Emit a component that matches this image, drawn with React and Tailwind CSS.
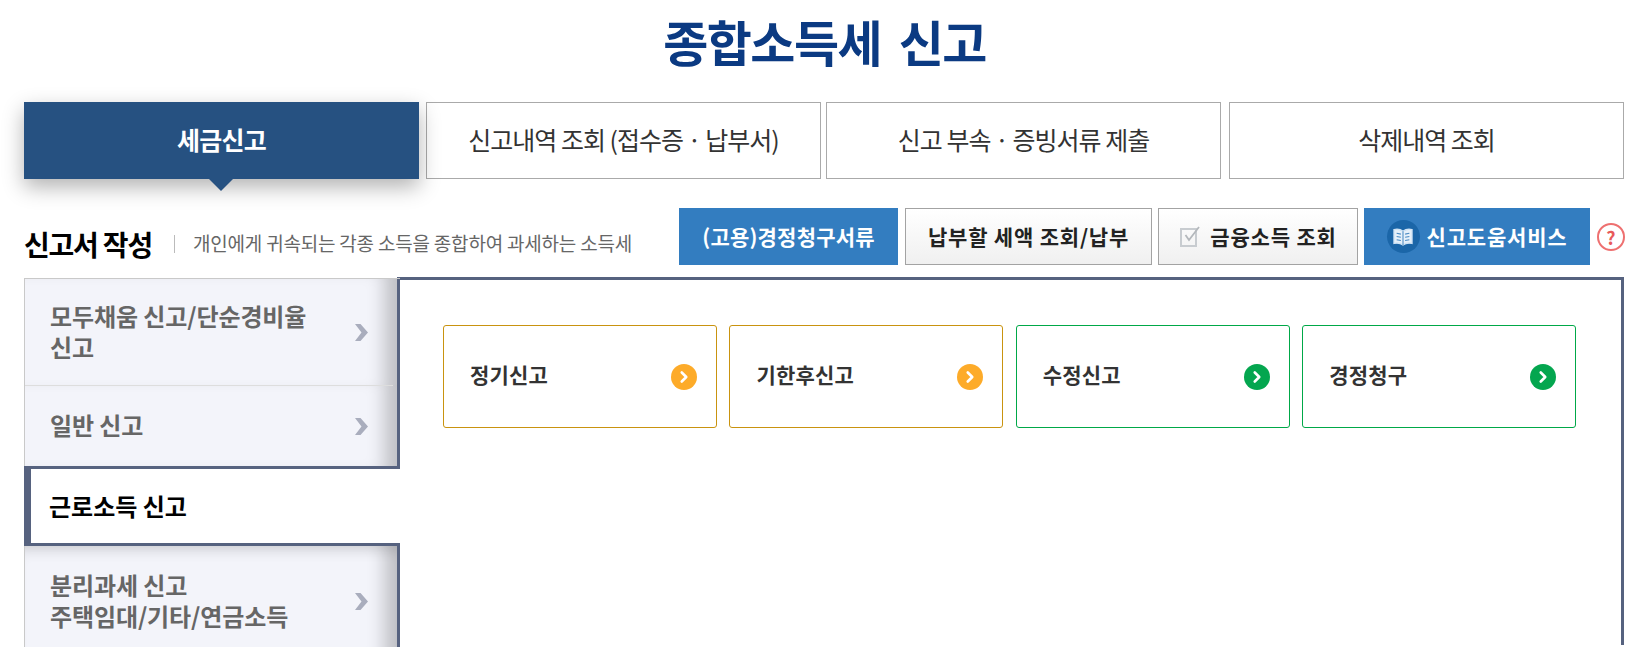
import { ChevronRight } from "lucide-react";

const FONT = "font-['Noto_Sans_CJK_KR','Noto_Sans',sans-serif]";

const tabs = [
    { label: "신고내역 조회 (접수증 · 납부서)", gap: "ml-[7px]" },
    { label: "신고 부속 · 증빙서류 제출", gap: "ml-[5px]" },
    { label: "삭제내역 조회", gap: "ml-[8px]" },
];

const cards = [
    { label: "정기신고", color: "orange" },
    { label: "기한후신고", color: "orange" },
    { label: "수정신고", color: "green" },
    { label: "경정청구", color: "green" },
];

const SIDE_SHADOW = "shadow-[inset_-24px_0_18px_-12px_rgba(0,0,0,0.22)]";

function MenuArrow() {
    return (
        <svg width="15" height="19" viewBox="0 0 15 19" className="shrink-0">
            <path d="M1 1h5.500L14 9.500 6.500 18H1l6.500-8.500z" fill="#a9adbd" />
        </svg>
    );
}

function SideItem({ text, className = "" }) {
    return (
        <div className={`relative flex items-center justify-between pl-[25px] pr-[28px] bg-[#f3f4fa] border-l border-[#c9c9c9] border-r-[3px] border-r-[#56627f] ${className}`}>
            <div className="text-[24px] leading-[31px] font-bold tracking-[-0.1px] text-[#666666] -mt-[3px] whitespace-pre-line">
                {text}
            </div>
            <MenuArrow />
        </div>
    );
}

function Card({ label, color }) {
    const orange = color === "orange";
    return (
        <div className={`flex-1 h-[103px] rounded-[3px] border flex items-center justify-between pl-[26px] pr-[19px] ${orange ? "border-[#c9930f]" : "border-[#00a848]"}`}>
            <span className="text-[21px] font-bold text-[#333333] tracking-[0.2px] -mt-[4px]">{label}</span>
            <span className={`w-[26px] h-[26px] rounded-full flex items-center justify-center ${orange ? "bg-[#fdab29]" : "bg-[#04a64f]"}`}>
                <ChevronRight size={18} strokeWidth={3.5} color="#ffffff" />
            </span>
        </div>
    );
}

export default function App() {
    return (
        <div className={`w-[1633px] h-[647px] overflow-hidden bg-white ${FONT}`}>
            <h1 className="h-[102px] pt-[9px] pl-[16px] text-center text-[49px] leading-[64px] font-bold text-[#0b3a82] tracking-[-1.5px] [word-spacing:8px]">
                종합소득세 신고
            </h1>

            <div className="flex pl-[24px]">
                <div className="relative w-[395px] h-[77px] pb-[2px] bg-[#265181] flex items-center justify-center text-white text-[25px] font-bold tracking-[-0.8px] shadow-[0_8px_20px_rgba(0,0,0,0.3)]">
                    세금신고
                    <div className="absolute left-[185px] top-[77px] w-0 h-0 border-l-[12px] border-r-[12px] border-t-[12px] border-l-transparent border-r-transparent border-t-[#265181]" />
                </div>
                {tabs.map((t) => (
                    <div key={t.label} className={`w-[395px] h-[77px] pb-[2px] border border-[#aaaaaa] flex items-center justify-center text-[25px] text-[#333333] tracking-[-1px] ${t.gap}`}>
                        {t.label}
                    </div>
                ))}
            </div>

            <div className="flex items-center h-[99px] pl-[24px] pr-[8px] pt-[30px]">
                <div className="text-[28px] font-bold text-black tracking-[-1.2px]">신고서 작성</div>
                <div className="w-px h-[18px] bg-[#bbbbbb] ml-[22px] mr-[18px]" />
                <div className="text-[19px] text-[#666666] tracking-[-0.2px]">개인에게 귀속되는 각종 소득을 종합하여 과세하는 소득세</div>
                <div className="ml-auto flex items-center gap-[6px] -mt-[14px]">
                    <div className="w-[219px] h-[57px] mr-[1px] bg-[#337dc0] flex items-center justify-center text-white text-[21px] font-bold tracking-[0.2px]">
                        (고용)경정청구서류
                    </div>
                    <div className="w-[247px] h-[57px] border border-[#a3a3a3] bg-gradient-to-b from-white to-[#f0f0f0] flex items-center justify-center text-[21px] font-bold text-[#222222] tracking-[0.8px]">
                        납부할 세액 조회/납부
                    </div>
                    <div className="w-[200px] h-[57px] border border-[#a3a3a3] bg-gradient-to-b from-white to-[#f0f0f0] flex items-center justify-center gap-[8px] text-[21px] font-bold text-[#222222] tracking-[0.8px]">
                        <svg width="23" height="23" viewBox="0 0 23 23" fill="none">
                            <path d="M2 4h15v17H2z" stroke="#c8ccd0" strokeWidth="2" />
                            <path d="M6.500 10l3.500 5L20 2" stroke="#b4b8bc" strokeWidth="1.8" />
                        </svg>
                        금융소득 조회
                    </div>
                    <div className="w-[226px] h-[57px] bg-[#337dc0] flex items-center justify-center gap-[7px] text-white text-[21px] font-bold tracking-[0.8px]">
                        <span className="w-[33px] h-[33px] rounded-full bg-[#1b66a8] flex items-center justify-center">
                            <svg width="22" height="18" viewBox="0 0 20 17" fill="none" stroke="#cfe3f5" strokeWidth="1.3">
                                <path d="M10 3C8 1.500 4 1 1.500 1.500v13C4 14 8 14.500 10 16c2-1.500 6-2 8.500-1.500v-13C16 1 12 1.500 10 3z" fill="#e6f0f9" />
                                <path d="M10 3v13M4 5l4 .8M4 8l4 .8M4 11l4 .8M16 5l-4 .8M16 8l-4 .8M16 11l-4 .8" stroke="#4b8bc4" strokeWidth="1" />
                            </svg>
                        </span>
                        신고도움서비스
                    </div>
                    <span className="w-[28px] h-[28px] ml-[1px] rounded-full border-2 border-[#ee7070] bg-white flex items-center justify-center text-[#e85a5a] text-[18px] font-bold leading-none">
                        ?
                    </span>
                </div>
            </div>

            <div className="flex pl-[24px] pr-[9px]">
                <div className="relative z-10 w-[376px] shrink-0 flex flex-col border-t border-[#c9c9c9]">
                    <SideItem text={"모두채움 신고/단순경비율\n신고"} className={`h-[107px] after:absolute after:left-0 after:right-[4px] after:bottom-0 after:h-px after:bg-[#dddddd] ${SIDE_SHADOW}`} />
                    <SideItem text="일반 신고" className={`h-[80px] ${SIDE_SHADOW}`} />
                    <div className="h-[80px] flex items-center bg-white border-[3px] border-r-0 border-l-[7px] border-[#56627f] pl-[18px] text-[24px] font-bold text-black tracking-[0px]">
                        <span className="-mt-[1px]">근로소득 신고</span>
                    </div>
                    <SideItem text={"분리과세 신고\n주택임대/기타/연금소득"} className="h-[110px] shadow-[inset_-24px_0_18px_-12px_rgba(0,0,0,0.22),inset_0_14px_14px_-10px_rgba(0,0,0,0.14)]" />
                </div>
                <div className="flex-1 h-[368px] border-t-[3px] border-r-[3px] border-[#56627f] -ml-[3px] bg-white pt-[45px] pl-[46px] pr-[45px] -mt-[1px]">
                    <div className="flex gap-[12.5px]">
                        {cards.map((c) => (
                            <Card key={c.label} {...c} />
                        ))}
                    </div>
                </div>
            </div>
        </div>
    );
}
